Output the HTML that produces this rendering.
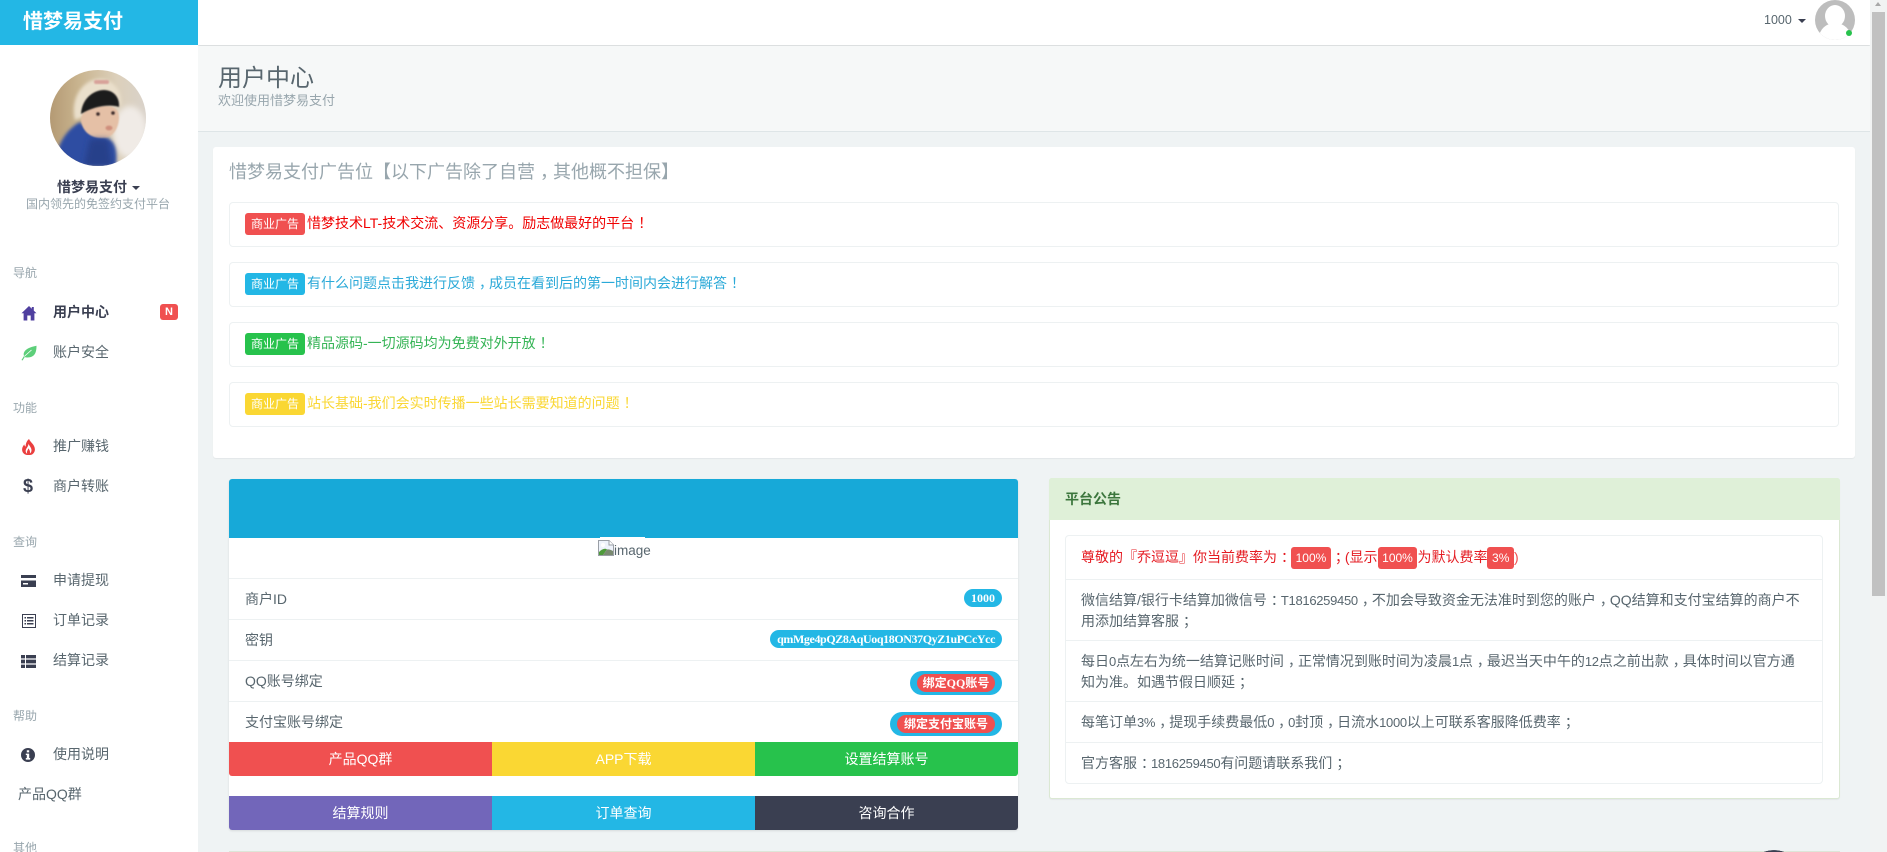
<!DOCTYPE html>
<html lang="zh-CN">
<head>
<meta charset="utf-8">
<title>用户中心</title>
<style>
html,body{margin:0;padding:0;width:1887px;height:852px;overflow:hidden;background:#eff3f4}
body{font-family:"Liberation Sans","Noto Sans CJK SC",sans-serif;font-size:14px;color:#58666e}
#root{position:absolute;left:0;top:0;width:1887px;height:852px;overflow:hidden}
.a{position:absolute;box-sizing:border-box}
.t{position:absolute;white-space:nowrap;line-height:20px}
.g{color:#98a6ad;font-size:12px;left:13px}
.nav{left:53px;color:#58666e}
.alert{position:absolute;box-sizing:border-box;left:229px;width:1610px;height:45px;border:1px solid #edf1f2;border-radius:4px;background:#fff}
.lab{position:absolute;left:245px;width:60px;height:22px;border-radius:3px;color:#fff;font-size:12px;line-height:22px;text-align:center}
.line{position:absolute;height:1px;background:#edf1f2}
.btn{position:absolute;width:263px;height:34px;line-height:34px;text-align:center;color:#fff}
.pill{position:absolute;right:885px;height:18px;border-radius:9px;background:#23b7e5;color:#fff;font:bold 12px/18px "Liberation Serif","Noto Serif CJK SC",serif;padding:0 7px;white-space:nowrap}
.bind{position:absolute;height:24px;border-radius:12px;background:#23b7e5}
.bind span{position:absolute;left:7px;right:7px;top:3px;height:18px;border-radius:9px;background:#f05050;color:#fff;font:bold 12px/18px "Liberation Serif","Noto Sans CJK SC",serif;text-align:center;white-space:nowrap}
.r{display:inline-block;height:22px;line-height:22px;background:#f05050;color:#fff;font-size:12px;border-radius:3px;padding:0 4.6px;vertical-align:middle}
.n{font-size:13px;letter-spacing:-.3px}
.p{position:relative;left:4px}
svg{position:absolute;display:block}
</style>
</head>
<body>
<div id="root">

<!-- header -->
<div class="a" style="left:198px;top:0;width:1672px;height:45px;background:#fff;box-shadow:0 1px 2px rgba(0,0,0,.12)"></div>
<div class="a" style="left:0;top:0;width:198px;height:45px;background:#23b7e5"></div>
<div class="t" style="left:23px;top:10px;font-size:20px;line-height:24px;font-weight:bold;color:#fff">惜梦易支付</div>

<div class="t" style="left:1764px;top:10px;font-size:12.5px;color:#58666e">1000</div>
<div class="a" style="left:1798px;top:19px;width:0;height:0;border-left:4px solid transparent;border-right:4px solid transparent;border-top:4px solid #3a3f51"></div>
<svg style="left:1815px;top:0" width="42" height="40" viewBox="0 0 42 40">
  <defs><clipPath id="hc"><circle cx="20" cy="20" r="20"/></clipPath></defs>
  <g clip-path="url(#hc)">
    <rect x="0" y="0" width="40" height="40" fill="#bdbdbd"/>
    <ellipse cx="20" cy="16" rx="10" ry="11" fill="#fff"/>
    <ellipse cx="20" cy="38" rx="16" ry="15" fill="#fff"/>
  </g>
  <circle cx="34" cy="33" r="3" fill="#27c24c"/>
</svg>

<!-- scrollbar -->
<div class="a" style="left:1870px;top:0;width:17px;height:852px;background:#f1f3f3"></div>
<div class="a" style="left:1872px;top:12px;width:13px;height:584px;background:#c1c1c1"></div>
<div class="a" style="left:1875px;top:2px;width:0;height:0;border-left:3.5px solid transparent;border-right:3.5px solid transparent;border-bottom:4px solid #a8a8a8"></div>

<!-- sidebar -->
<div class="a" style="left:0;top:45px;width:198px;height:807px;background:#fff"></div>
<svg style="left:50px;top:70px" width="96" height="96" viewBox="0 0 96 96">
  <defs>
    <clipPath id="av"><circle cx="48" cy="48" r="48"/></clipPath>
    <filter id="b3" x="-30%" y="-30%" width="160%" height="160%"><feGaussianBlur stdDeviation="3"/></filter>
    <filter id="b2" x="-20%" y="-20%" width="140%" height="140%"><feGaussianBlur stdDeviation="1.6"/></filter>
    <filter id="b1" x="-20%" y="-20%" width="140%" height="140%"><feGaussianBlur stdDeviation=".8"/></filter>
    <linearGradient id="bg" x1="0" x2="1" y1="0" y2="0"><stop offset="0" stop-color="#b49a74"/><stop offset=".3" stop-color="#c9b48f"/><stop offset=".7" stop-color="#dcd0bb"/><stop offset="1" stop-color="#d9d2ca"/></linearGradient>
  </defs>
  <g clip-path="url(#av)">
    <rect width="96" height="96" fill="url(#bg)"/>
    <ellipse cx="80" cy="62" rx="17" ry="26" fill="#f0ebe6" filter="url(#b3)"/>
    <path d="M8 80C12 66 22 56 30 52L40 60L56 68C64 70 68 78 66 96H14Z" fill="#2e4da2" filter="url(#b2)"/>
    <path d="M25 50C20 28 33 9 50 9C63 9 72 20 71 35L60 40L36 46Z" fill="#eadfcb" filter="url(#b2)"/>
    <rect x="44" y="10" width="15" height="4" rx="2" fill="#d8a29a" filter="url(#b1)"/>
    <path d="M31 50C31 40 42 36 52 36C62 35 69 38 69 47C69 58 63 68 53 68C41 69 32 61 31 50Z" fill="#e5c0a6" filter="url(#b1)"/>
    <path d="M31 44C32 28 44 20 54 20C63 20 70 27 69 37C60 34 44 36 31 44Z" fill="#1f1b1d" filter="url(#b1)"/>
    <circle cx="48" cy="44" r="1.8" fill="#3a2c2c" filter="url(#b1)"/>
    <circle cx="63" cy="43" r="1.8" fill="#3a2c2c" filter="url(#b1)"/>
    <ellipse cx="59" cy="58" rx="3.5" ry="2.4" fill="#cf8f7d" filter="url(#b1)"/>
    <path d="M40 69L58 69L62 96H34Z" fill="#263f8a" filter="url(#b3)"/>
  </g>
</svg>
<div class="t" style="left:57px;top:177px;font-weight:bold;color:#3a3f51">惜梦易支付</div>
<div class="a" style="left:132px;top:186px;width:0;height:0;border-left:4px solid transparent;border-right:4px solid transparent;border-top:4px solid #3a3f51"></div>
<div class="t" style="left:26px;top:194px;font-size:12px;color:#98a6ad">国内领先的免签约支付平台</div>

<div class="t g" style="top:263px">导航</div>
<div class="t nav" style="top:302px;font-weight:bold;color:#3a3f51">用户中心</div>
<div class="a" style="left:160px;top:304px;width:18px;height:16px;background:#f05050;border-radius:3px;color:#fff;font:bold 11px/16px 'Liberation Sans',sans-serif;text-align:center">N</div>
<div class="t nav" style="top:342px">账户安全</div>
<div class="t g" style="top:398px">功能</div>
<div class="t nav" style="top:436px">推广赚钱</div>
<div class="t nav" style="top:476px">商户转账</div>
<div class="t g" style="top:532px">查询</div>
<div class="t nav" style="top:570px">申请提现</div>
<div class="t nav" style="top:610px">订单记录</div>
<div class="t nav" style="top:650px">结算记录</div>
<div class="t g" style="top:706px">帮助</div>
<div class="t nav" style="top:744px">使用说明</div>
<div class="t" style="left:18px;top:784px;color:#58666e">产品QQ群</div>
<div class="t g" style="top:840px;height:12px;line-height:16px;overflow:hidden">其他</div>

<!-- nav icons -->
<svg style="left:21px;top:305px" width="16" height="16" viewBox="0 0 16 16"><path d="M8 1L0.5 8.2H2.6V15.5H6.3V10.5H9.7V15.5H13.4V8.2H15.5L12.8 5.6V2H10.8V3.7Z" fill="#4f3f9f"/></svg>
<svg style="left:21px;top:345px" width="16" height="16" viewBox="0 0 16 16"><path d="M15.5 .8C15.5 8 13.5 12.5 6.5 12.5C5.5 12.5 4.5 12.3 3.8 12L1.5 15.5L.5 15L3 11C1.5 6 6.5 2.5 15.5 .8Z" fill="#5dcf7a"/><path d="M3.2 11.5L10.5 5" stroke="#fff" stroke-width=".8" fill="none"/></svg>
<svg style="left:21px;top:439px" width="15" height="16" viewBox="0 0 14 15"><path d="M7.5 0C8.5 3 12.8 5 13 9.5C13.2 12.8 10.5 15 8.5 15H5.5C3 14.8 .8 12.5 1 9.5C1.1 7.5 2.2 6.3 3 5C3.2 6 3.6 6.8 4.4 7C4.2 4.2 5.6 1.5 7.5 0Z" fill="#ea3f3f"/><path d="M7 4.5C8 7 9.8 8.2 9.8 10.5C9.8 11.8 9.2 12.8 8.3 13.5C8.8 11.5 7.8 9.8 6.8 8.8C6.6 10.5 5 11.4 5.8 13.8C4.5 13 4 11.5 4.6 10C5.4 8.2 6.8 7 7 4.5Z" fill="#fff"/></svg>
<div class="t" style="left:23px;top:475px;font:bold 18px/22px 'Liberation Sans',sans-serif;color:#3a3f51">$</div>
<svg style="left:21px;top:575px" width="15" height="12" viewBox="0 0 15 12"><path d="M0 0H15V12H0ZM0 3V5.5H15V3ZM2 8V9.5H7V8Z" fill="#3a3f51" fill-rule="evenodd"/></svg>
<svg style="left:22px;top:614px" width="14" height="14" viewBox="0 0 14 14"><path d="M.5 .5H13.5V13.5H.5Z" fill="none" stroke="#3a3f51"/><path d="M2.5 3H4V4.5H2.5ZM5 3H11.5V4.5H5ZM2.5 6H4V7.5H2.5ZM5 6H11.5V7.5H5ZM2.5 9H4V10.5H2.5ZM5 9H11.5V10.5H5Z" fill="#3a3f51"/></svg>
<svg style="left:21px;top:655px" width="15" height="13" viewBox="0 0 15 13"><path d="M0 0H4V3.4H0ZM5 0H15V3.4H5ZM0 4.6H4V8.4H0ZM5 4.6H15V8.4H5ZM0 9.6H4V13H0ZM5 9.6H15V13H5Z" fill="#3a3f51"/></svg>
<svg style="left:21px;top:748px" width="14" height="14" viewBox="0 0 14 14"><path d="M7 0A7 7 0 1 1 7 14A7 7 0 1 1 7 0ZM5.8 2.2V4.4H8.2V2.2ZM4.8 5.6V7H5.8V10H4.8V11.6H9.2V10H8.2V5.6Z" fill="#3a3f51" fill-rule="evenodd"/></svg>

<!-- title bar -->
<div class="a" style="left:198px;top:46px;width:1672px;height:86px;background:#f6f8f8;border-bottom:1px solid #dee5e7"></div>
<div class="t" style="left:218px;top:63px;font-size:24px;line-height:32px;color:#58666e">用户中心</div>
<div class="t" style="left:218px;top:91px;font-size:13px;color:#98a6ad">欢迎使用惜梦易支付</div>

<!-- ads card -->
<div class="a" style="left:213px;top:147px;width:1642px;height:311px;background:#fff;border-radius:3px;box-shadow:0 1px 1px rgba(0,0,0,.05)"></div>
<div class="t" style="left:229px;top:160px;font-size:18px;line-height:24px;color:#98a6ad">惜梦易支付广告位【以下广告除了自营<span class="p" style="left:5px">，</span>其他概不担保】</div>

<div class="alert" style="top:202px"></div>
<div class="lab" style="top:213px;background:#f05050">商业广告</div>
<div class="t" style="left:307px;top:213px;color:#f00000">惜梦技术LT-技术交流、资源分享。励志做最好的平台<span class="p">！</span></div>

<div class="alert" style="top:262px"></div>
<div class="lab" style="top:273px;background:#23b7e5">商业广告</div>
<div class="t" style="left:307px;top:273px;color:#2aa9d8">有什么问题点击我进行反馈<span class="p">，</span>成员在看到后的第一时间内会进行解答<span class="p">！</span></div>

<div class="alert" style="top:322px"></div>
<div class="lab" style="top:333px;background:#27c24c">商业广告</div>
<div class="t" style="left:307px;top:333px;color:#35b455">精品源码-一切源码均为免费对外开放<span class="p">！</span></div>

<div class="alert" style="top:382px"></div>
<div class="lab" style="top:393px;background:#fad733">商业广告</div>
<div class="t" style="left:307px;top:393px;color:#fad733">站长基础-我们会实时传播一些站长需要知道的问题<span class="p">！</span></div>

<!-- left panel -->
<div class="a" style="left:229px;top:479px;width:789px;height:351px;background:#fff;border-radius:3px;box-shadow:0 1px 2px rgba(0,0,0,.1)"></div>
<div class="a" style="left:229px;top:479px;width:789px;height:59px;background:#17a9d8;border-radius:3px 3px 0 0"></div>
<div class="a" style="left:600px;top:537px;width:45px;height:1px;background:#fff"></div>
<svg style="left:598px;top:540px" width="16" height="16" viewBox="0 0 16 16">
  <path d="M.5 .5H11L15.5 5V15.5H.5Z" fill="#eef3fb" stroke="#9a9fa6"/>
  <path d="M11 .5V5H15.5" fill="#fff" stroke="#9a9fa6"/>
  <path d="M1 15V12C4 9 7 8 9 9.5L5 15Z" fill="#4e9a3a"/>
  <path d="M5 15L9 9.5C11 9 13 10 15 11V15Z" fill="#7a8a70"/>
  <circle cx="5" cy="5" r="2" fill="#fff"/>
</svg>
<div class="t" style="left:614px;top:541px;font-size:13.5px;color:#58666e">image</div>

<div class="line" style="left:229px;top:578px;width:789px"></div>
<div class="line" style="left:229px;top:619px;width:789px"></div>
<div class="line" style="left:229px;top:660px;width:789px"></div>
<div class="line" style="left:229px;top:701px;width:789px"></div>

<div class="t" style="left:245px;top:589px">商户ID</div>
<div class="t" style="left:245px;top:630px">密钥</div>
<div class="t" style="left:245px;top:671px">QQ账号绑定</div>
<div class="t" style="left:245px;top:712px">支付宝账号绑定</div>

<div class="pill" style="top:589px">1000</div>
<div class="pill" style="top:630px;letter-spacing:-.4px">qmMge4pQZ8AqUoq18ON37QyZ1uPCcYcc</div>
<div class="bind" style="left:910px;top:671px;width:92px"><span>绑定QQ账号</span></div>
<div class="bind" style="left:890px;top:712px;width:112px"><span>绑定支付宝账号</span></div>

<div class="btn" style="left:229px;top:742px;background:#f05050;border-radius:0 0 0 3px">产品QQ群</div>
<div class="btn" style="left:492px;top:742px;background:#fad733">APP下载</div>
<div class="btn" style="left:755px;top:742px;background:#27c24c;border-radius:0 0 3px 0">设置结算账号</div>
<div class="btn" style="left:229px;top:796px;background:#7266ba;border-radius:0 0 0 3px">结算规则</div>
<div class="btn" style="left:492px;top:796px;background:#23b7e5">订单查询</div>
<div class="btn" style="left:755px;top:796px;background:#3a3f51;border-radius:0 0 3px 0">咨询合作</div>

<!-- right panel -->
<div class="a" style="left:1049px;top:478px;width:791px;height:321px;background:#fff;border:1px solid #dbe8d3;border-radius:3px;box-shadow:0 1px 1px rgba(0,0,0,.05)"></div>
<div class="a" style="left:1049px;top:478px;width:791px;height:42px;background:#dff0d8;border-radius:3px 3px 0 0"></div>
<div class="t" style="left:1065px;top:489px;font-weight:bold;color:#3c763d">平台公告</div>

<div class="a" style="left:1065px;top:535px;width:758px;height:249px;border:1px solid #edf1f2;border-radius:4px"></div>
<div class="line" style="left:1066px;top:579px;width:756px"></div>
<div class="line" style="left:1066px;top:640px;width:756px"></div>
<div class="line" style="left:1066px;top:701px;width:756px"></div>
<div class="line" style="left:1066px;top:742px;width:756px"></div>

<div class="t" style="left:1081px;top:546px;color:#e51c23;line-height:22px">尊敬的『乔逗逗』你当前费率为<span class="p">：</span><span class="r">100%</span><span class="p">；</span>(显示<span class="r">100%</span>为默认费率<span class="r">3%</span><span style="color:#f05050">)</span></div>
<div class="t" style="left:1081px;top:590px">微信结算/银行卡结算加微信号<span class="p">：</span><span class="n">T1816259450</span><span class="p">，</span>不加会导致资金无法准时到您的账户<span class="p">，</span>QQ结算和支付宝结算的商户不<br>用添加结算客服<span class="p">；</span></div>
<div class="t" style="left:1081px;top:651px">每日<span class="n">0</span>点左右为统一结算记账时间<span class="p">，</span>正常情况到账时间为凌晨<span class="n">1</span>点<span class="p">，</span>最迟当天中午的<span class="n">12</span>点之前出款<span class="p">，</span>具体时间以官方通<br>知为准。如遇节假日顺延<span class="p">；</span></div>
<div class="t" style="left:1081px;top:712px">每笔订单<span class="n">3%</span><span class="p">，</span>提现手续费最低<span class="n">0</span><span class="p">，</span><span class="n">0</span>封顶<span class="p">，</span>日流水<span class="n">1000</span>以上可联系客服降低费率<span class="p">；</span></div>
<div class="t" style="left:1081px;top:753px">官方客服<span class="p">：</span><span class="n">1816259450</span>有问题请联系我们<span class="p">；</span></div>

<!-- bottom -->
<div class="a" style="left:229px;top:851px;width:1611px;height:1px;background:#dde6d8"></div>
<div class="a" style="left:1744px;top:850px;width:60px;height:2px;background:radial-gradient(circle 30px at 30px 30px,#3a3f51 99%,transparent 100%)"></div>

</div>
</body>
</html>
